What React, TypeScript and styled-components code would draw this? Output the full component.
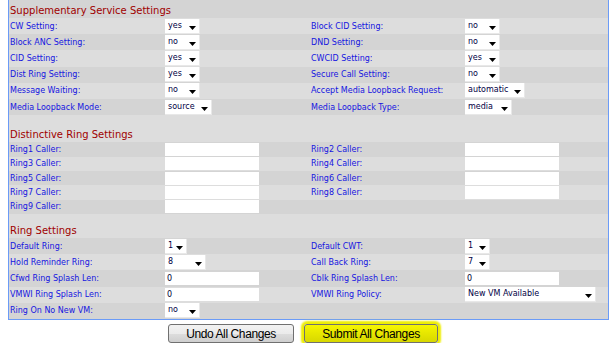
import styled, { createGlobalStyle } from "styled-components";

type Control =
  | { kind: "select"; value: string; width: number }
  | { kind: "input"; value: string }
  | null;

type Cell = { label: string; control: Control } | null;

type Section = {
  title: string;
  headDark: boolean;
  gap: number;
  startDark: boolean;
  compact?: boolean;
  rows: [Cell, Cell][];
};

const sel = (value: string, width: number): Control => ({ kind: "select", value, width });
const inp = (value = ""): Control => ({ kind: "input", value });
const cell = (label: string, control: Control): Cell => ({ label, control });

const sections: Section[] = [
  {
    title: "Supplementary Service Settings",
    headDark: true,
    gap: 5,
    startDark: false,
    rows: [
      [cell("CW Setting:", sel("yes", 35)), cell("Block CID Setting:", sel("no", 35))],
      [cell("Block ANC Setting:", sel("no", 35)), cell("DND Setting:", sel("no", 35))],
      [cell("CID Setting:", sel("yes", 35)), cell("CWCID Setting:", sel("yes", 35))],
      [cell("Dist Ring Setting:", sel("yes", 35)), cell("Secure Call Setting:", sel("no", 35))],
      [cell("Message Waiting:", sel("no", 35)), cell("Accept Media Loopback Request:", sel("automatic", 60))],
      [cell("Media Loopback Mode:", sel("source", 47)), cell("Media Loopback Type:", sel("media", 47))],
    ],
  },
  {
    title: "Distinctive Ring Settings",
    headDark: false,
    gap: 14,
    startDark: true,
    compact: true,
    rows: [
      [cell("Ring1 Caller:", inp()), cell("Ring2 Caller:", inp())],
      [cell("Ring3 Caller:", inp()), cell("Ring4 Caller:", inp())],
      [cell("Ring5 Caller:", inp()), cell("Ring6 Caller:", inp())],
      [cell("Ring7 Caller:", inp()), cell("Ring8 Caller:", inp())],
      [cell("Ring9 Caller:", inp()), null],
    ],
  },
  {
    title: "Ring Settings",
    headDark: false,
    gap: 11,
    startDark: true,
    rows: [
      [cell("Default Ring:", sel("1", 22)), cell("Default CWT:", sel("1", 25))],
      [cell("Hold Reminder Ring:", sel("8", 41)), cell("Call Back Ring:", sel("7", 25))],
      [cell("Cfwd Ring Splash Len:", inp("0")), cell("Cblk Ring Splash Len:", inp("0"))],
      [cell("VMWI Ring Splash Len:", inp("0")), cell("VMWI Ring Policy:", sel("New VM Available", 131))],
      [cell("Ring On No New VM:", sel("no", 35)), null],
    ],
  },
];

const Caret = () => (
  <svg width="7" height="4" viewBox="0 0 7 4">
    <path d="M0 0h7L3.5 4z" fill="#000" />
  </svg>
);

const renderControl = (c: Control) => {
  if (!c) return null;
  if (c.kind === "input") return <TextBox readOnly value={c.value} />;
  return (
    <SelectBox $w={c.width}>
      <span>{c.value}</span>
      <Caret />
    </SelectBox>
  );
};

const App = () => {
  return (
    <Page>
      <GlobalStyle />
      <Panel>
        {sections.map((s) => (
          <div key={s.title}>
            <SectionHead $dark={s.headDark} $gap={s.gap}>
              {s.title}
            </SectionHead>
            {s.rows.map((r, i) => (
              <Row
                key={i}
                $dark={(i % 2 === 0) === s.startDark}
                $compact={!!s.compact}
              >
                <Label>{r[0]?.label}</Label>
                <Field>{r[0] && renderControl(r[0].control)}</Field>
                <Label>{r[1]?.label}</Label>
                <Field>{r[1] && renderControl(r[1].control)}</Field>
              </Row>
            ))}
          </div>
        ))}
      </Panel>
      <ButtonBar>
        <Button $w={126}>Undo All Changes</Button>
        <Button $w={134} $highlight>
          Submit All Changes
        </Button>
      </ButtonBar>
    </Page>
  );
};

const GlobalStyle = createGlobalStyle`
  body {
    margin: 0;
    background: #ffffff;
  }
`;

const Page = styled.div`
  padding-left: 8px;
  font-family: "DejaVu Sans", Verdana, sans-serif;
`;

const Panel = styled.div`
  width: 601px;
  box-sizing: border-box;
  background: #dddddd;
  border: 1px solid #6b9bf7;
  border-top: none;
`;

const SectionHead = styled.div<{ $dark: boolean; $gap: number }>`
  padding: ${(p) => p.$gap}px 0 1px 1px;
  background: ${(p) => (p.$dark ? "#d4d4d4" : "#dddddd")};
  color: #a00000;
  font-size: 10px;
  line-height: 12px;
`;

const Row = styled.div<{ $dark: boolean; $compact: boolean }>`
  display: grid;
  grid-template-columns: 156px 145px 155px 1fr;
  align-items: center;
  height: ${(p) => (p.$compact ? "14.4px" : "16.2px")};
  background: ${(p) => (p.$dark ? "#d4d4d4" : "#dddddd")};
`;

const Label = styled.div`
  padding-left: 1px;
  color: #1414e0;
  font-size: 8px;
  white-space: nowrap;
`;

const Field = styled.div`
  display: flex;
  align-items: center;
`;

const SelectBox = styled.div<{ $w: number }>`
  display: inline-flex;
  justify-content: space-between;
  align-items: flex-end;
  box-sizing: border-box;
  width: ${(p) => p.$w}px;
  height: 15px;
  padding: 0 3px 3px 3px;
  background: #ffffff;
  border-right: 1px solid #e8e8e8;
  border-bottom: 1px solid #e8e8e8;
  color: #000044;
  font-size: 8px;
  span {
    align-self: center;
    line-height: 10px;
    margin-top: 3px;
  }
`;

const TextBox = styled.input`
  box-sizing: border-box;
  width: 94px;
  height: 13px;
  margin: 0;
  padding: 0 0 0 2px;
  border: none;
  background: #ffffff;
  color: #000033;
  font-family: "DejaVu Sans", Verdana, sans-serif;
  font-size: 8px;
  outline: none;
`;

const ButtonBar = styled.div`
  display: flex;
  justify-content: center;
  gap: 10px;
  box-sizing: border-box;
  width: 601px;
  padding: 4px 11px 0 0;
`;

const Button = styled.button<{ $highlight?: boolean; $w: number }>`
  width: ${(p) => p.$w}px;
  height: 19px;
  margin: 0;
  padding: 0;
  border: 1px solid #707070;
  border-radius: 3px;
  background: ${(p) =>
    p.$highlight
      ? "linear-gradient(#f6f600, #e6e600 50%, #d8d800)"
      : "linear-gradient(#f2f2f2, #ebebeb 50%, #dddddd 51%, #cfcfcf)"};
  box-shadow: ${(p) => (p.$highlight ? "0 0 2px 3px #eeee00" : "none")};
  color: #000;
  font-family: "Liberation Sans", Arial, sans-serif;
  font-size: 12px;
  letter-spacing: -0.4px;
`;

export default App;
